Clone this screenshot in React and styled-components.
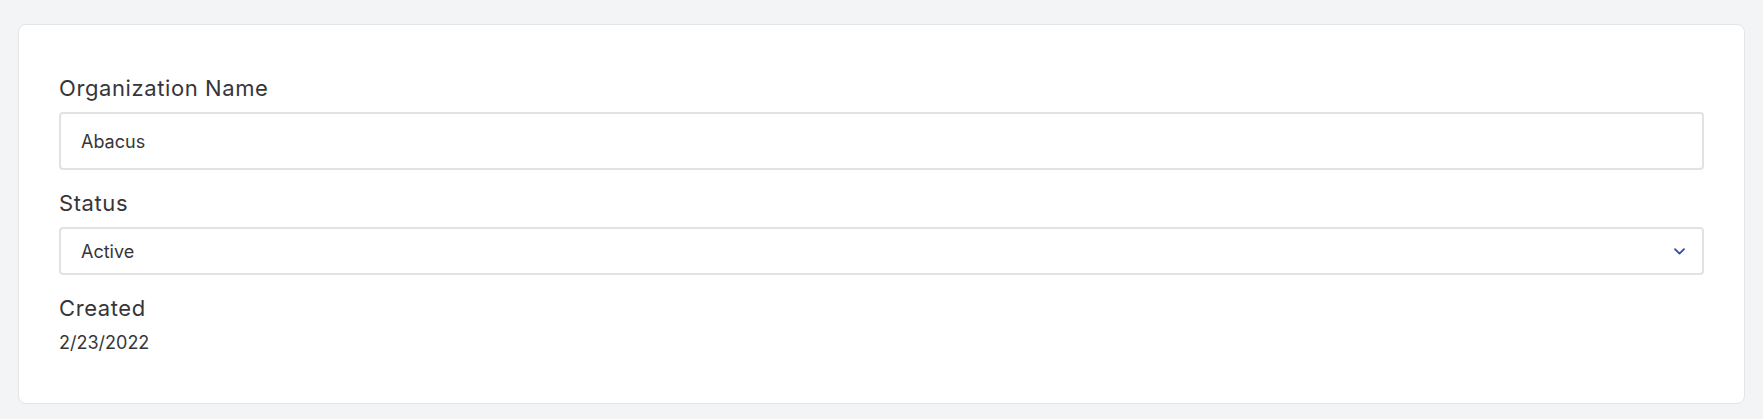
import styled, { createGlobalStyle } from "styled-components";

const GlobalStyle = createGlobalStyle`
  html, body {
    margin: 0;
    background: #f3f4f6;
    font-family: Inter, "Noto Sans", sans-serif;
    color: #36363a;
  }
`;

export default function App() {
  return (
    <>
      <GlobalStyle />
      <Page>
        <Card>
          <Field>
            <Label>Organization Name</Label>
            <TextInput defaultValue="Abacus" />
          </Field>

          <Field>
            <Label>Status</Label>
            <SelectBox>
              <span>Active</span>
              <svg width="11" height="7" viewBox="0 0 11 7" fill="none">
                <path
                  d="M1 1.2L5.5 5.6L10 1.2"
                  stroke="#2f4bb5"
                  strokeWidth="1.8"
                  strokeLinecap="round"
                  strokeLinejoin="round"
                />
              </svg>
            </SelectBox>
          </Field>

          <Field $last>
            <Label>Created</Label>
            <Value>2/23/2022</Value>
          </Field>
        </Card>
      </Page>
    </>
  );
}

// ===== Styling =====
const Page = styled.main`
  padding: 24px 18px 18px;
`;

const Card = styled.section`
  background: #fff;
  border: 1px solid #e3e5e8;
  border-radius: 8px;
  padding: 49px 40px 48px;
`;

const Field = styled.div`
  display: flex;
  flex-direction: column;
  margin-bottom: ${(p) => (p.$last ? "0" : "19px")};
`;

const Label = styled.label`
  font-size: 22px;
  line-height: 28px;
  font-weight: 400;
  letter-spacing: 0.6px;
  margin-bottom: 10px;
  color: #36363a;
`;

const TextInput = styled.input`
  box-sizing: border-box;
  height: 58px;
  padding: 0 20px;
  border: 2px solid #e2e2e2;
  border-radius: 4px;
  font-family: inherit;
  font-size: 18px;
  color: #36363a;
  outline: none;
  background: #fff;
`;

const SelectBox = styled.div`
  box-sizing: border-box;
  height: 48px;
  padding: 0 17px 0 20px;
  border: 2px solid #e2e2e2;
  border-radius: 4px;
  display: flex;
  align-items: center;
  justify-content: space-between;
  font-size: 18px;
  color: #36363a;
  background: #fff;
`;

const Value = styled.div`
  font-size: 18px;
  line-height: 24px;
  margin-top: -1px;
  color: #36363a;
`;
